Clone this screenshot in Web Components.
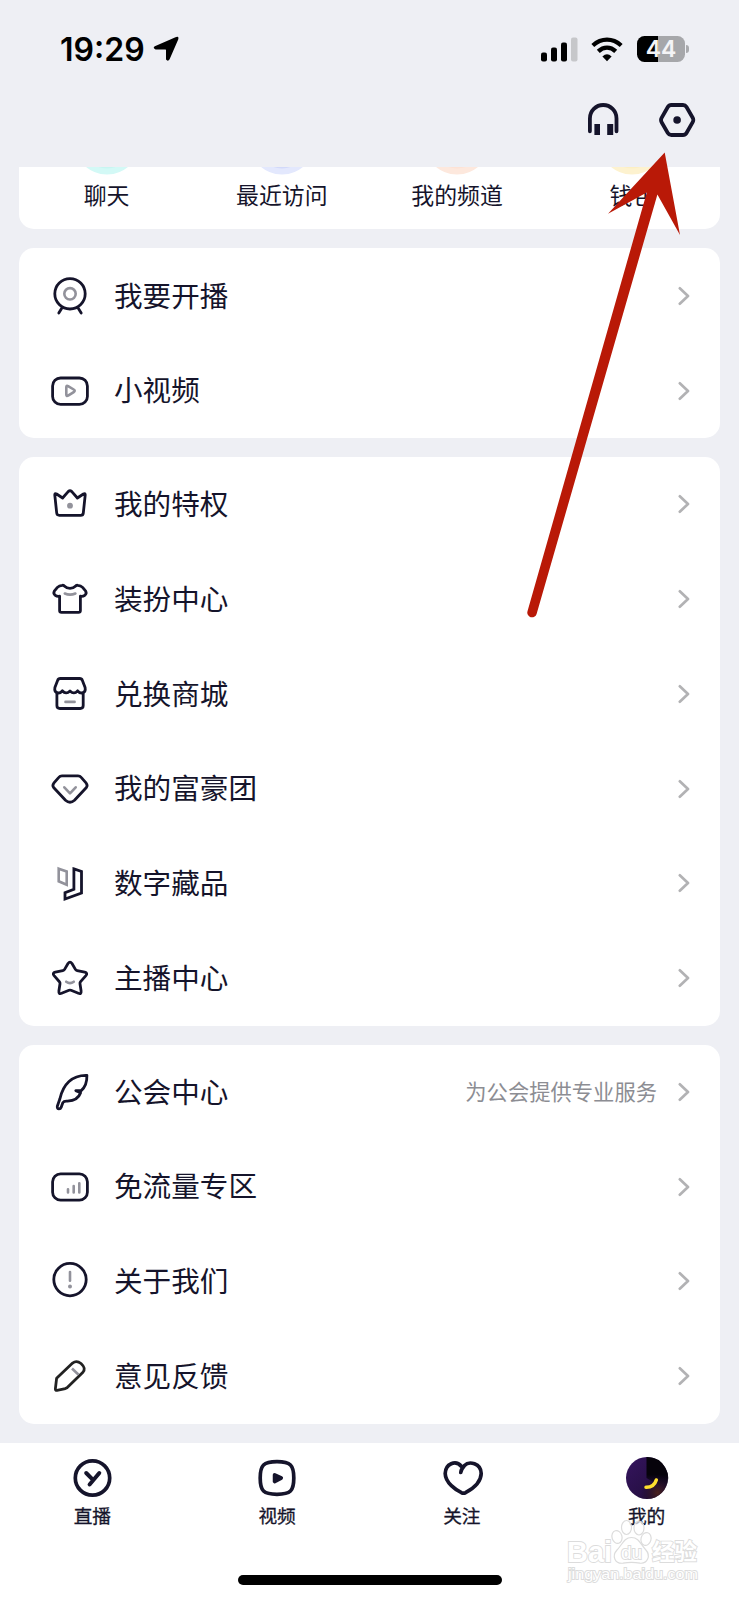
<!DOCTYPE html>
<html lang="zh-CN">
<head>
<meta charset="utf-8">
<title>我的</title>
<style>
  html, body { margin: 0; padding: 0; }
  body {
    width: 739px;
    height: 1600px;
    overflow: hidden;
    background: #eeeff4;
    color: #15142b;
    font-family: "Noto Sans CJK SC", "Noto Sans", sans-serif;
  }
</style>
</head>
<body>
<mine-page></mine-page>

<script>
const icons = {
  live: `<circle cx="20" cy="17.8" r="15.2"/><path d="M11.6 32.4 8.8 37M28.4 32.4 31.2 37"/><circle class="g" cx="20" cy="17.8" r="5.7"/>`,
  video: `<rect x="2.6" y="7" width="34.8" height="26.4" rx="8"/><path class="g" d="M16.3 16.2q0-2 1.8-1.1l5.6 3.4q2 1.3 0 2.6l-5.6 3.6q-1.8.9-1.8-1.1Z"/>`,
  crown: `<path d="M4.8 11.2q-.2-2.4 1.8-1.2L12.6 14 18.4 7.4q1.6-1.4 3.2 0L27.4 14 33.4 10q2-1.2 1.8 1.2L33.3 29q-.2 2.3-2.6 2.3H9.3Q6.9 31.3 6.7 29Z"/><circle class="gf" cx="20" cy="21.7" r="2.9"/>`,
  shirt: `<path d="M12.3 6.3q1.5-.3 2.3 1Q16.5 9.3 20 9.3t5.4-2q.8-1.3 2.3-1Q30.8 6.5 32.6 8.400L35.700 12.200Q37 14.500 34.700 16.300 33 17.600 30.400 17.200V31.400q0 1.900-1.900 1.900H11.500q-1.900 0-1.900-1.900V17.200Q7 17.600 5.300 16.300 3 14.500 4.300 12.200L7.400 8.400Q9.200 6.500 12.300 6.300Z"/><path class="g" d="M14.800 14.500Q20 16.700 25.400 14.500"/>`,
  shop: `<path d="M6.900 18.500V31.500q0 3 3 3H30.200q3 0 3-3V18.500M10.300 4.500H29.700q2 0 2.700 1.900L35.100 13.500Q36 18 32.400 18.900 29.600 19.400 27.600 16.800 24 21 20 17 16 21 12.300 16.800 10.400 19.400 7.600 18.900 4 18 4.900 13.500L7.600 6.400Q8.300 4.500 10.300 4.500Z"/><path class="g" d="M15.500 27.900H24.600"/>`,
  diamond: `<path d="M12 6.800H28q2 0 3.200 1.500l4.800 5.500q2 2.500 .4 4.700L24.500 31.300q-4.500 3.900-9 0L3.600 18.500q-1.600-2.200.4-4.700l4.800-5.500Q10 6.800 12 6.800Z"/><path class="g" d="M14.300 18.300 20 24.300 25.700 18.300"/>`,
  nft: `<path class="g" d="M8.700 5.700 16.700 8.500V21.700L8.700 18.300Z" style="stroke-linejoin:miter"/><path d="M23.900 5.900 31.500 8.500V30.100L15 36V29.700L23.900 26.200Z" style="stroke-linejoin:miter"/>`,
  star: `<path d="M18 5.500q2-2.700 4 0l3.400 5.900q.6 1 1.800 1.200l7.500 1.600q3.300.8 1.200 3.400l-5.300 6.100q-.8.900-.6 2.100l1.100 7.200q.4 3.500-2.700 2.300L21 32.300q-1-.4-2 0l-7.400 3q-3.100 1.200-2.700-2.300l1.100-7.200q.2-1.200-.6-2.100l-5.300-6.100q-2.100-2.600 1.200-3.400l7.500-1.600q1.200-.2 1.800-1.200Z"/><path class="g" d="M16.200 23.700Q20 26.600 23.800 23.700"/>`,
  feather: `<path d="M36.900 3.300Q26 3 19 9.500 12.500 15.500 10 26.500L7.300 34.200Q7 36.800 9 36.900 10.600 36.900 11.200 35.200L12.900 30.600Q14 28.700 17.500 29.100 28 28.400 30.600 20.700L25.800 18.600H31.200Q37.200 13.500 36.900 3.300Z"/>`,
  data: `<rect x="2.6" y="6.8" width="34.8" height="26.4" rx="8"/><path class="g" d="M18 22.200V25.400M23.700 19V25.400M29.300 16.300V25.400"/>`,
  about: `<circle cx="20" cy="18.600" r="16.200"/><path class="g" d="M20 11V19.800"/><circle class="gf" cx="20" cy="25.600" r="2"/>`,
  pencil: `<g style="stroke:#222"><path d="M6.600 22.300 22.600 7.100Q26.500 4 31 7.500 36.500 12.500 32.700 16.600L17 31.700 15.300 32.600 7 34.400Q5.200 34.500 5.400 32.600Z"/></g><path class="g" d="M22 12.500 28.600 18.700" style="stroke-linecap:butt"/>`,
};

const define = (name, html) => customElements.define(name, class extends HTMLElement {
  constructor() {
    super();
    this.shadowDOM = this.attachShadow({ mode: "open" });
  }

  connectedCallback() {
    this.shadowDOM.innerHTML = typeof html === "function" ? html(this) : html;
  }
});

define("line-icon", (el) => `
  <style>
    :host { display: block; width: 40px; height: 40px; flex: none; }
    svg { display: block; overflow: visible; fill: none; stroke: #15142b; stroke-width: 2.8; stroke-linecap: round; stroke-linejoin: round; }
    .g { stroke: #92929b; stroke-width: 2.6; }
    .gf { fill: #92929b; stroke: none; }
  </style>
  <svg width="40" height="40" viewBox="0 0 40 40">${icons[el.getAttribute("name")]}</svg>
`);

define("status-bar", `
  <style>
    :host { display: flex; align-items: center; height: 98px; box-sizing: border-box; padding: 0 50px 0 60px; color: #000; }
    .time { font: 600 32px/40px Inter, sans-serif; letter-spacing: 0; width: 93px; padding-top: 2px; white-space: nowrap; }
    .right { margin-left: auto; display: flex; align-items: center; }
    .battery {
      display: flex; align-items: center; justify-content: center;
      width: 48px; height: 26px; margin-left: 14px; border-radius: 7.5px;
      background: linear-gradient(90deg, #000 21px, #a6a7aa 21px);
      color: #f4f4f6; font: 600 23px/26px Inter, sans-serif; letter-spacing: 0;
    }
    .nub { width: 3px; height: 8px; margin-left: 1px; border-radius: 0 3px 3px 0; background: #a9aaad; }
    svg { display: block; }
  </style>
  <span class="time">19:29</span>
  <svg width="27" height="26" viewBox="0 0 27 26"><path d="M22.500 1.200Q26.300-.2 25.200 3.400L16.600 23.300Q15 26 13 23.600V14.300Q13.200 13.400 12.400 13.400H2.600Q-.7 12.200 1.800 10.300Z"/></svg>
  <div class="right">
    <svg width="38" height="25" viewBox="0 0 38 25">
      <rect x="1" y="15.500" width="6" height="9" rx="2"/><rect x="11" y="10.500" width="6" height="14" rx="2"/>
      <rect x="21" y="5.500" width="6" height="19" rx="2"/><rect x="31" y=".5" width="6.500" height="24" rx="2" fill="#c6c7ca"/>
    </svg>
    <svg width="32" height="25" viewBox="0 0 32 25" style="margin-left:13px" fill="none" stroke="#000" stroke-width="4.300">
      <path d="M1.800 8.500Q8.300 2.700 16 2.700T30.200 8.500"/><path d="M7.300 14.400Q11.200 10.700 16 10.700T24.700 14.400"/>
      <path d="M11.400 19.400Q16 15 20.600 19.400L16 24.200Z" fill="#000" stroke="none"/>
    </svg>
    <div class="battery">44</div><div class="nub"></div>
  </div>
`);

define("tool-bar", `
  <style>
    :host { display: flex; justify-content: flex-end; gap: 38px; height: 69px; box-sizing: border-box; padding: 4px 43px 0 0; }
    svg { display: block; fill: none; stroke: #15142b; stroke-width: 3.8; stroke-linecap: round; stroke-linejoin: round; }
  </style>
  <svg width="34" height="36" viewBox="0 0 34 36"><path d="M3.900 29.300V16.400A13.300 13.400 0 0 1 30.500 16.400V29.300"/><path d="M8.400 22h5.600v11H8.400ZM21.200 22h6v11h-6Z" fill="#15142b" stroke="none"/></svg>
  <svg width="38" height="36" viewBox="0 0 38 36"><path d="M13.300 3H25Q27.300 3 28.500 5L34.700 15.800Q35.900 18 34.700 20.200L28.500 31Q27.300 33 25 33H13.300Q11 33 9.800 31L3.600 20.200Q2.400 18 3.600 15.800L9.800 5Q11 3 13.300 3Z"/><circle cx="19.100" cy="18" r="3.800" fill="#15142b" stroke="none"/></svg>
`);

define("quick-entry", (el) => `
  <style>
    :host { display: flex; flex-direction: column; align-items: center; flex: 1; }
    svg { display: block; }
    span { margin-top: 3px; font-size: 22.900px; line-height: 33px; white-space: nowrap; }
  </style>
  <svg width="66" height="8" viewBox="0 58.500 66 8"><circle cx="33" cy="33" r="33" fill="${el.getAttribute("color")}"/><ellipse cx="33" cy="54" rx="13" ry="6" fill="${el.getAttribute("inner")}"/></svg>
  <span><slot></slot></span>
`);

define("card-group", `
  <style>
    :host { display: block; margin: 0 19px 19px; border-radius: 15px; background: #fff; }
    :host([quick]) { display: flex; height: 62.4px; border-radius: 0 0 15px 15px; }
  </style>
  <slot></slot>
`);

define("menu-row", (el) => `
  <style>
    :host { display: flex; align-items: center; height: 94.780px; box-sizing: border-box; padding: 0 29px 0 31px; }
    .label { margin-left: 24px; padding-bottom: 2.500px; font-size: 28.600px; line-height: 40px; white-space: nowrap; }
    .note { margin-left: auto; margin-right: 21px; padding-bottom: 2px; font-size: 21.300px; line-height: 30px; color: #8c8d93; white-space: nowrap; }
    svg { display: block; flex: none; }
  </style>
  <line-icon name="${el.getAttribute("icon")}"></line-icon>
  <span class="label"><slot></slot></span>
  <span class="note">${el.getAttribute("note") || ""}</span>
  <svg width="13" height="20" viewBox="0 0 13 20" fill="none" stroke="#b2b2b4" stroke-width="2.700" stroke-linecap="round" stroke-linejoin="round"><path d="M1.800 2.300 10 10 1.800 17.700"/></svg>
`);

define("tab-item", `
  <style>
    :host { display: flex; flex-direction: column; align-items: center; flex: 1; padding-top: 13.500px; }
    span { font-size: 18.700px; line-height: 28px; margin-top: 1px; -webkit-text-stroke: 0.300px #15142b; }
  </style>
  <slot name="icon"></slot>
  <span><slot></slot></span>
`);

define("tab-bar", `
  <style>
    :host { display: flex; flex-direction: column; align-items: center; height: 158px; background: #fff; }
    .tabs { display: flex; width: 100%; height: 132.500px; }
    .home { width: 264px; height: 10px; border-radius: 5px; background: #000; }
  </style>
  <div class="tabs"><slot></slot></div>
  <div class="home"></div>
`);

// Pointer and watermark float above the page.
define("page-overlay", `
  <style>
    :host { position: absolute; left: 0; top: 0; width: 739px; height: 1600px; pointer-events: none; }
    svg { display: block; }
    text { fill: #fff; stroke: #dcdcdc; stroke-width: 1.800px; paint-order: stroke; }
  </style>
  <svg width="739" height="1600" viewBox="0 0 739 1600">
    <path fill="#b91907" d="M664.700 152.500 680 235 657.400 194.500 536.600 614A4.700 4.700 0 0 1 527.500 611.200L646.800 192.500 608 213.700Z"/>
    <g font-family="Liberation Sans, sans-serif">
      <text x="567" y="1561.500" font-size="29" font-weight="700" textLength="45" lengthAdjust="spacingAndGlyphs">Bai</text>
      <g fill="#fff" fill-opacity=".7" stroke="#dcdcdc" stroke-width="1.200">
        <ellipse cx="617" cy="1537" rx="5" ry="6.500" transform="rotate(-15 617 1537)"/>
        <ellipse cx="626.500" cy="1527.500" rx="5" ry="7"/>
        <ellipse cx="639" cy="1528" rx="5" ry="7"/>
        <ellipse cx="646" cy="1539" rx="5" ry="6.500" transform="rotate(15 646 1539)"/>
        <path d="M631.500 1537.500C639 1537.500 641 1545 645.500 1549.500 651.500 1556 647 1564 640 1563.200 634 1562 629 1562 623 1563.200 615 1564 611.500 1556 617 1550 622 1545 624 1537.500 631.500 1537.500Z"/>
      </g>
      <text x="621" y="1559" font-size="18" textLength="21" lengthAdjust="spacingAndGlyphs">du</text>
      <text x="652" y="1559.500" font-size="23" font-weight="700" font-family="Noto Sans CJK SC, sans-serif" textLength="45" lengthAdjust="spacingAndGlyphs">经验</text>
      <text x="568" y="1579" font-size="15.500" textLength="130" lengthAdjust="spacingAndGlyphs">jingyan.baidu.com</text>
    </g>
  </svg>
`);

define("mine-page", `
  <style>
    :host { display: block; position: relative; width: 739px; height: 1600px; overflow: hidden; }
    svg { display: block; fill: none; stroke: #15142b; stroke-width: 3.700; stroke-linecap: round; stroke-linejoin: round; }
  </style>
  <status-bar></status-bar>
  <tool-bar></tool-bar>
  <card-group quick>
    <quick-entry color="#d3f9f6" inner="#c8f5f1">聊天</quick-entry>
    <quick-entry color="#e3e8fd" inner="#d2d9f9">最近访问</quick-entry>
    <quick-entry color="#fde8dd" inner="#fde2d5">我的频道</quick-entry>
    <quick-entry color="#fdf2cf" inner="#fcefc3">钱包</quick-entry>
  </card-group>
  <card-group>
    <menu-row icon="live">我要开播</menu-row>
    <menu-row icon="video">小视频</menu-row>
  </card-group>
  <card-group>
    <menu-row icon="crown">我的特权</menu-row>
    <menu-row icon="shirt">装扮中心</menu-row>
    <menu-row icon="shop">兑换商城</menu-row>
    <menu-row icon="diamond">我的富豪团</menu-row>
    <menu-row icon="nft">数字藏品</menu-row>
    <menu-row icon="star">主播中心</menu-row>
  </card-group>
  <card-group>
    <menu-row icon="feather" note="为公会提供专业服务">公会中心</menu-row>
    <menu-row icon="data">免流量专区</menu-row>
    <menu-row icon="about">关于我们</menu-row>
    <menu-row icon="pencil">意见反馈</menu-row>
  </card-group>
  <tab-bar>
    <tab-item>
      <svg slot="icon" width="44" height="44" viewBox="0 0 44 44"><circle cx="22.500" cy="22" r="17.200"/><path d="M16.200 17 22.500 23.300M29.300 17 19.600 28.500" stroke-width="4"/></svg>直播
    </tab-item>
    <tab-item>
      <svg slot="icon" width="44" height="44" viewBox="0 0 44 44"><path d="M22 5.700C35.500 5.700 38.800 9 38.800 22S35.500 38.300 22 38.300 5.200 35 5.200 22 8.500 5.700 22 5.700Z"/><path d="M19.600 18.800 26.200 22 19.600 25.500Z" fill="#15142b"/></svg>视频
    </tab-item>
    <tab-item>
      <svg slot="icon" width="44" height="44" viewBox="0 0 44 44"><path d="M20.800 16.500Q21 13.500 24.500 9.500C29 4.800 41 7 41.200 17.500 41 27 30.500 34 25.500 36.700Q23.500 37.600 21.500 36.700C16 34 5.400 27 5.200 17.500 5.500 8 15.500 3.500 21.500 10.500"/></svg>关注
    </tab-item>
    <tab-item>
      <svg slot="icon" width="44" height="44" viewBox="0 0 44 44" style="stroke:none">
        <defs>
          <linearGradient id="purple" x1="0" y1="0" x2="1" y2="1"><stop offset="0" stop-color="#35145f"/><stop offset=".6" stop-color="#281047"/><stop offset="1" stop-color="#1c0b2a"/></linearGradient>
          <linearGradient id="shade" x1="0" y1="0" x2="0" y2="1"><stop offset=".55" stop-color="#06030b"/><stop offset="1" stop-color="#06030b" stop-opacity="0"/></linearGradient>
          <radialGradient id="glow" cx=".75" cy=".85" r=".4"><stop offset="0" stop-color="#4a211d"/><stop offset="1" stop-color="#190b20" stop-opacity="0"/></radialGradient>
        </defs>
        <circle cx="22" cy="22" r="21" fill="url(#purple)"/><path d="M21.500 1H22A21 21 0 0 1 40 33L21.500 22Z" fill="url(#shade)"/><circle cx="22" cy="22" r="21" fill="url(#glow)"/>
        <path d="M21 31.300Q29 31.500 31.300 24" fill="none" stroke="#ffe02e" stroke-width="3.500"/>
      </svg>我的
    </tab-item>
  </tab-bar>
  <page-overlay></page-overlay>
`);
</script>
</body>
</html>
